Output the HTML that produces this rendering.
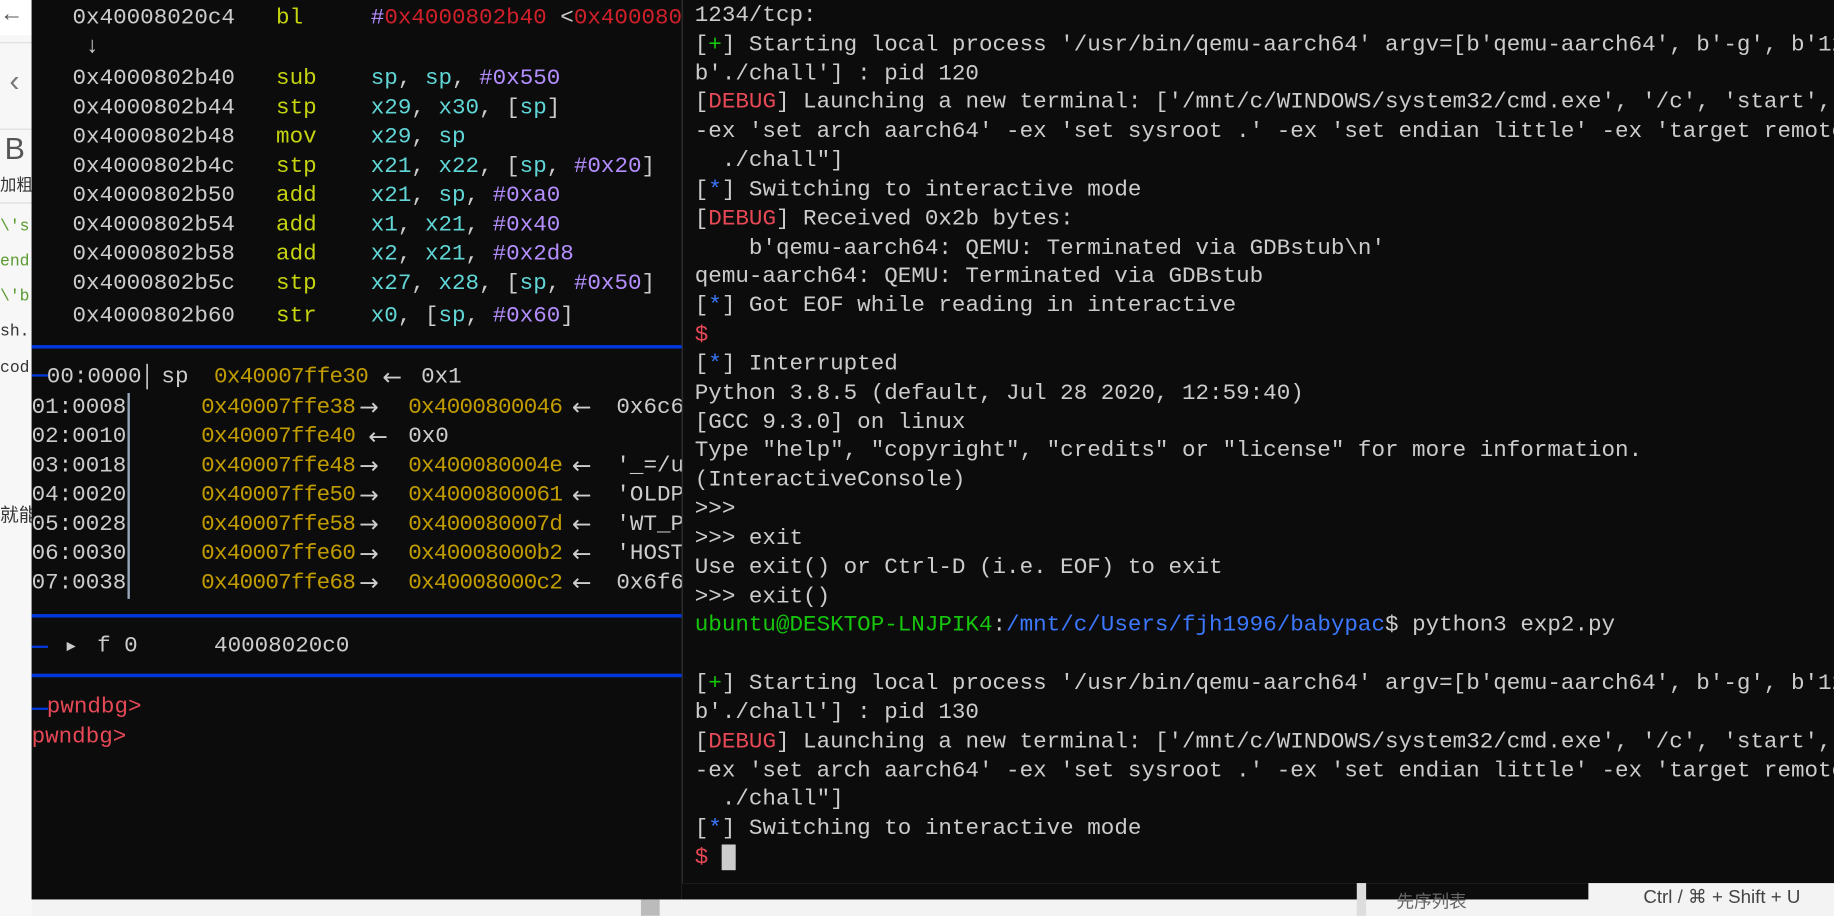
<!DOCTYPE html>
<html><head><meta charset="utf-8"><style>
html,body{margin:0;padding:0;width:1834px;height:916px;overflow:hidden;background:#f3f3f3}
#s{position:absolute;left:0;top:0;width:1568px;height:783px;transform:scale(1.16964);transform-origin:0 0;overflow:hidden;background:#f3f3f3}
.m{font-family:"Liberation Mono","DejaVu Sans Mono",monospace;font-size:19.3px;white-space:pre;line-height:25px}
#L{position:absolute;left:27px;top:0;width:556px;height:769px;background:#0c0c0c;overflow:hidden;color:#cccccc}
#R{position:absolute;left:583px;top:0;width:985px;height:755px;background:#0c0c0c;overflow:hidden;color:#cccccc;border-left:1px solid #2a2a2a;box-sizing:border-box}
.ln{position:absolute;left:0;height:25px;width:2000px}
.ln span.a{position:absolute;top:0}
.ar{font-family:"DejaVu Sans",sans-serif;font-size:20px}
.y{color:#c5d40e}.c{color:#61d6d6}.p{color:#b48eff}.r{color:#e74856}.rd{color:#d0202a}.o{color:#c19c00;letter-spacing:-0.6px}
.g{color:#16c60c}.b{color:#3b78ff}
.hl{position:absolute;left:0;width:556px;height:3px;background:#0037da}
#side{position:absolute;left:0;top:0;width:27px;height:783px;background:#f7f7f7;font-family:"Liberation Sans","Noto Sans CJK SC",sans-serif;color:#555;overflow:hidden;white-space:nowrap}
</style></head><body><div id="s">
<div id="side">
<div style="position:absolute;top:0;left:0;width:27px;height:30px;background:#fff"></div>
<div style="position:absolute;left:0;top:1px;font-size:20px;color:#555">←</div>
<div style="position:absolute;left:0;top:36px;width:27px;height:1px;background:#ddd"></div>
<div style="position:absolute;left:8px;top:54px;font-size:26px;color:#777">‹</div>
<div style="position:absolute;left:0;top:110px;width:27px;height:1px;background:#ddd"></div>
<div style="position:absolute;left:4px;top:112px;font-size:26px;color:#555">B</div>
<div style="position:absolute;left:0;top:148px;font-size:14px;color:#333">加粗</div>
<div style="position:absolute;left:0;top:173px;width:27px;height:1px;background:#ddd"></div>
<div class="m" style="position:absolute;left:0;top:182px;font-size:14px;color:#5a9a30">\'s</div>
<div class="m" style="position:absolute;left:0;top:212px;font-size:14px;color:#5a9a30">end</div>
<div class="m" style="position:absolute;left:0;top:242px;font-size:14px;color:#5a9a30">\'b</div>
<div class="m" style="position:absolute;left:0;top:272px;font-size:14px;color:#333">sh.</div>
<div class="m" style="position:absolute;left:0;top:303px;font-size:14px;color:#333">cod</div>
<div style="position:absolute;left:0;top:427px;font-size:16px;color:#333">就能</div>
</div>

<div id="L" class="m">
<div class="ln" style="top:3px"><span class="a" style="left:35px">0x40008020c4</span><span class="a y" style="left:209px">bl</span><span class="a" style="left:290px"><span class="p">#</span><span class="rd">0x4000802b40</span> &lt;<span class="rd">0x4000802b40</span>&gt;</span></div>
<div class="ln" style="top:28px"><span class="a" style="left:46px">↓</span></div>
<div class="ln" style="top:55px"><span class="a" style="left:35px">0x4000802b40</span><span class="a y" style="left:209px">sub</span><span class="a" style="left:290px"><span class="c">sp</span>, <span class="c">sp</span>, <span class="p">#0x550</span></span></div>
<div class="ln" style="top:80px"><span class="a" style="left:35px">0x4000802b44</span><span class="a y" style="left:209px">stp</span><span class="a" style="left:290px"><span class="c">x29</span>, <span class="c">x30</span>, [<span class="c">sp</span>]</span></div>
<div class="ln" style="top:105px"><span class="a" style="left:35px">0x4000802b48</span><span class="a y" style="left:209px">mov</span><span class="a" style="left:290px"><span class="c">x29</span>, <span class="c">sp</span></span></div>
<div class="ln" style="top:130px"><span class="a" style="left:35px">0x4000802b4c</span><span class="a y" style="left:209px">stp</span><span class="a" style="left:290px"><span class="c">x21</span>, <span class="c">x22</span>, [<span class="c">sp</span>, <span class="p">#0x20</span>]</span></div>
<div class="ln" style="top:155px"><span class="a" style="left:35px">0x4000802b50</span><span class="a y" style="left:209px">add</span><span class="a" style="left:290px"><span class="c">x21</span>, <span class="c">sp</span>, <span class="p">#0xa0</span></span></div>
<div class="ln" style="top:180px"><span class="a" style="left:35px">0x4000802b54</span><span class="a y" style="left:209px">add</span><span class="a" style="left:290px"><span class="c">x1</span>, <span class="c">x21</span>, <span class="p">#0x40</span></span></div>
<div class="ln" style="top:205px"><span class="a" style="left:35px">0x4000802b58</span><span class="a y" style="left:209px">add</span><span class="a" style="left:290px"><span class="c">x2</span>, <span class="c">x21</span>, <span class="p">#0x2d8</span></span></div>
<div class="ln" style="top:230px"><span class="a" style="left:35px">0x4000802b5c</span><span class="a y" style="left:209px">stp</span><span class="a" style="left:290px"><span class="c">x27</span>, <span class="c">x28</span>, [<span class="c">sp</span>, <span class="p">#0x50</span>]</span></div>
<div class="ln" style="top:258px"><span class="a" style="left:35px">0x4000802b60</span><span class="a y" style="left:209px">str</span><span class="a" style="left:290px"><span class="c">x0</span>, [<span class="c">sp</span>, <span class="p">#0x60</span>]</span></div>
<div class="hl" style="top:295px"></div>
<div style="position:absolute;left:0;top:320px;width:14px;height:2px;background:#0037da"></div>
<div class="ln" style="top:310px"><span class="a" style="left:13px">00:0000</span><span class="a" style="left:93px">│</span><span class="a" style="left:111px">sp</span><span class="a o" style="left:156px">0x40007ffe30</span><span class="a ar" style="left:300px">←</span><span class="a" style="left:333px">0x1</span></div>
<div style="position:absolute;left:82px;top:336px;width:2px;height:176px;background:#9ab"></div>
<div class="ln" style="top:336px"><span class="a" style="left:0">01:0008</span><span class="a o" style="left:145px">0x40007ffe38</span><span class="a ar" style="left:280px">→</span><span class="a o" style="left:322px">0x4000800046</span><span class="a ar" style="left:462px">←</span><span class="a" style="left:500px">0x6c6f632f7273752f</span></div>
<div class="ln" style="top:361px"><span class="a" style="left:0">02:0010</span><span class="a o" style="left:145px">0x40007ffe40</span><span class="a ar" style="left:288px">←</span><span class="a" style="left:322px">0x0</span></div>
<div class="ln" style="top:386px"><span class="a" style="left:0">03:0018</span><span class="a o" style="left:145px">0x40007ffe48</span><span class="a ar" style="left:280px">→</span><span class="a o" style="left:322px">0x400080004e</span><span class="a ar" style="left:462px">←</span><span class="a" style="left:500px">'_=/usr/bin/'</span></div>
<div class="ln" style="top:411px"><span class="a" style="left:0">04:0020</span><span class="a o" style="left:145px">0x40007ffe50</span><span class="a ar" style="left:280px">→</span><span class="a o" style="left:322px">0x4000800061</span><span class="a ar" style="left:462px">←</span><span class="a" style="left:500px">'OLDPWD=/'</span></div>
<div class="ln" style="top:436px"><span class="a" style="left:0">05:0028</span><span class="a o" style="left:145px">0x40007ffe58</span><span class="a ar" style="left:280px">→</span><span class="a o" style="left:322px">0x400080007d</span><span class="a ar" style="left:462px">←</span><span class="a" style="left:500px">'WT_PROFILE'</span></div>
<div class="ln" style="top:461px"><span class="a" style="left:0">06:0030</span><span class="a o" style="left:145px">0x40007ffe60</span><span class="a ar" style="left:280px">→</span><span class="a o" style="left:322px">0x40008000b2</span><span class="a ar" style="left:462px">←</span><span class="a" style="left:500px">'HOSTTYPE'</span></div>
<div class="ln" style="top:486px"><span class="a" style="left:0">07:0038</span><span class="a o" style="left:145px">0x40007ffe68</span><span class="a ar" style="left:280px">→</span><span class="a o" style="left:322px">0x40008000c2</span><span class="a ar" style="left:462px">←</span><span class="a" style="left:500px">0x6f6c3d474e414c</span></div>
<div class="hl" style="top:525px"></div>
<div style="position:absolute;left:0;top:552px;width:14px;height:2px;background:#0037da"></div>
<div class="ln" style="top:540px"><span class="a" style="left:30px;font-size:13px">▶</span><span class="a" style="left:56px">f 0</span><span class="a" style="left:156px">40008020c0</span></div>
<div class="hl" style="top:576px"></div>
<div style="position:absolute;left:0;top:605px;width:14px;height:2px;background:#0037da"></div>
<div class="ln r" style="top:592px"><span class="a" style="left:13px">pwndbg&gt;</span></div>
<div class="ln r" style="top:618px"><span class="a" style="left:0">pwndbg&gt;</span></div>
</div>

<div id="R" class="m"><div style="position:absolute;left:10px;top:1px;line-height:24.83px">1234/tcp:
[<span class="g">+</span>] Starting local process '/usr/bin/qemu-aarch64' argv=[b'qemu-aarch64', b'-g', b'1234', b'-L', b'.',
b'./chall'] : pid 120
[<span class="r">DEBUG</span>] Launching a new terminal: ['/mnt/c/WINDOWS/system32/cmd.exe', '/c', 'start', 'wsl.exe', 'gdb-multiarch'
-ex 'set arch aarch64' -ex 'set sysroot .' -ex 'set endian little' -ex 'target remote localhost:1234'
  ./chall"]
[<span class="b">*</span>] Switching to interactive mode
[<span class="r">DEBUG</span>] Received 0x2b bytes:
    b'qemu-aarch64: QEMU: Terminated via GDBstub\n'
qemu-aarch64: QEMU: Terminated via GDBstub
[<span class="b">*</span>] Got EOF while reading in interactive
<span class="r">$</span>
[<span class="b">*</span>] Interrupted
Python 3.8.5 (default, Jul 28 2020, 12:59:40)
[GCC 9.3.0] on linux
Type "help", "copyright", "credits" or "license" for more information.
(InteractiveConsole)
&gt;&gt;&gt;
&gt;&gt;&gt; exit
Use exit() or Ctrl-D (i.e. EOF) to exit
&gt;&gt;&gt; exit()
<span class="g">ubuntu@DESKTOP-LNJPIK4</span>:<span class="b">/mnt/c/Users/fjh1996/babypac</span>$ python3 exp2.py

[<span class="g">+</span>] Starting local process '/usr/bin/qemu-aarch64' argv=[b'qemu-aarch64', b'-g', b'1234', b'-L', b'.',
b'./chall'] : pid 130
[<span class="r">DEBUG</span>] Launching a new terminal: ['/mnt/c/WINDOWS/system32/cmd.exe', '/c', 'start', 'wsl.exe', 'gdb-multiarch'
-ex 'set arch aarch64' -ex 'set sysroot .' -ex 'set endian little' -ex 'target remote localhost:1234'
  ./chall"]
[<span class="b">*</span>] Switching to interactive mode
<span class="r">$</span> <span style="background:#cccccc">&#160;</span></div></div>

<div style="position:absolute;left:583px;top:755px;width:775px;height:14px;background:#0c0c0c"></div>
<div style="position:absolute;left:548px;top:769px;width:16px;height:14px;background:#bbb"></div>
<div style="position:absolute;left:1160px;top:755px;width:8px;height:28px;background:#ddd"></div>
<div style="position:absolute;left:1194px;top:760px;font-family:'Liberation Sans','Noto Sans CJK SC',sans-serif;font-size:15px;color:#666">先序列表</div>
<div style="position:absolute;left:1405px;top:757px;font-family:'Liberation Sans','DejaVu Sans',sans-serif;font-size:16px;color:#444">Ctrl / ⌘ + Shift + U</div>
</div></body></html>
